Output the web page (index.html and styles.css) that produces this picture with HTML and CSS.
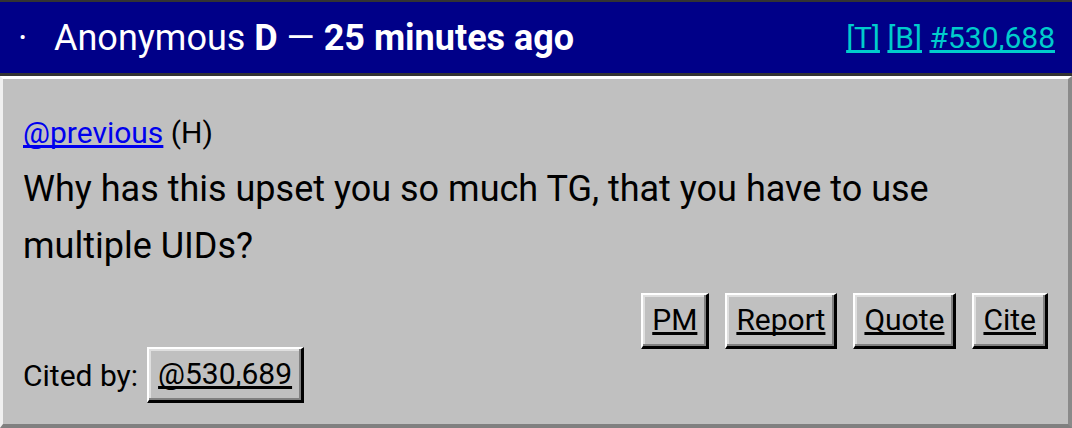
FILE: index.html
```html
<!DOCTYPE html>
<html>
<head>
	<meta charset="UTF-8">
	<title>Post #530,688</title>
	<meta name="viewport" content="width=device-width, initial-scale=1">
	<link rel="stylesheet" href="styles.css">
</head>
<body>

	<div class="post" id="p530688">

		<div class="post-head">
			<span class="dot">&middot;</span>
			<span class="who">Anonymous <b>D</b> &mdash; <b>25 minutes ago</b></span>
			<span class="links"><a href="#">[T]</a> <a href="#">[B]</a> <a href="#">#530,688</a></span>
		</div>

		<div class="post-body">

			<p class="reply-to"><a href="#">@previous</a> (H)</p>

			<p class="text">Why has this upset you so much TG, that you have to use multiple UIDs?</p>

			<div class="actions">
				<a class="btn" href="#">PM</a>
				<a class="btn" href="#">Report</a>
				<a class="btn" href="#">Quote</a>
				<a class="btn" href="#">Cite</a>
			</div>

			<div class="cited">
				<span>Cited by:</span>
				<a class="btn" href="#">@530,689</a>
			</div>

		</div>

	</div>

</body>
</html>
```

FILE: styles.css
```css
html {
	box-sizing: border-box;
}

*,
*:before,
*:after {
	box-sizing: inherit;
}

body {
	margin: 0;
	font-family: Roboto, "Liberation Sans", Arial, sans-serif;
	font-size: 30px;
	background: #c0c0c0;
	color: #000;
}

p {
	margin: 0;
}

a {
	text-decoration-skip-ink: none;
}

.post-head {
	display: flex;
	align-items: center;
	height: 76px;
	padding: 0 17px 0 18px;
	background: #000088;
	border-top: 2px solid #333;
	border-bottom: 3px solid #333;
	color: #fff;
	font-size: 36px;
}

.dot {
	width: 36px;
}

.who {
	flex: 1;
}

.links {
	font-size: 30px;
}

.links a {
	color: #00cccc;
}

.post-body {
	height: 352px;
	padding: 34px 21px 0 20px;
	border-style: solid;
	border-width: 3px 4px 4px 3px;
	border-color: #fff #8a8a8a #808080 #f0f0f0;
}

.reply-to {
	line-height: 40px;
}

.reply-to a {
	color: #0000ee;
}

.text {
	margin-top: 8px;
	font-size: 36px;
	line-height: 57px;
}

.actions {
	display: flex;
	justify-content: flex-end;
	gap: 16px;
	margin-top: 18px;
	margin-right: -1px;
}

.btn {
	display: inline-block;
	padding: 7px 9px 9px;
	color: #000;
	line-height: 35px;
	background: #c0c0c0;
	border-style: solid;
	border-width: 2px 3px 3px 2px;
	border-color: #fff #000 #000 #fff;
	box-shadow: inset -2px -2px 0 #808080, inset 2px 2px 0 #dfdfdf;
}

.cited {
	display: flex;
	align-items: center;
	gap: 9px;
	margin-top: -2px;
}
```
